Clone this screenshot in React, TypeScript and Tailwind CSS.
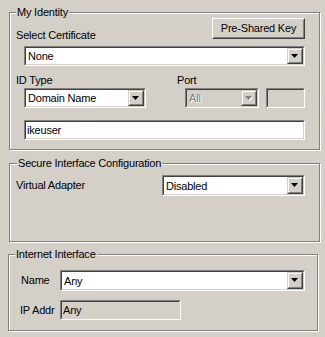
import type { ReactNode } from 'react';

// classic windows dialog: group boxes, combos and edits

function Group({ legend, legendPos, className, children }: { legend: string; legendPos: string; className: string; children: ReactNode }) {
  return (
    <div className={`relative border border-[#808080] shadow-[inset_1px_1px_0_#fff,1px_1px_0_#fff] ${className}`}>
      <span className={`absolute top-[-7px] bg-[#d4d0c8] px-[1px] ${legendPos}`}>{legend}</span>
      {children}
    </div>
  );
}

function Sunken({ className, bg, children }: { className: string; bg: string; children?: ReactNode }) {
  return (
    <div className={`border border-t-[#808080] border-l-[#808080] border-b-white border-r-white ${className}`}>
      <div className={`h-full flex items-center border border-t-[#404040] border-l-[#404040] border-b-[#d4d0c8] border-r-[#d4d0c8] ${bg}`}>
        {children}
      </div>
    </div>
  );
}

function Arrow({ disabled }: { disabled?: boolean }) {
  return (
    <svg width="8" height="5" viewBox="0 0 8 5" className="block">
      {disabled && <path d="M1 1h7L4.5 5z" fill="#fff" />}
      <path d="M0 0h7L3.5 4z" fill={disabled ? '#808080' : '#000'} />
    </svg>
  );
}

function Combo({ value, className, disabled }: { value: string; className: string; disabled?: boolean }) {
  return (
    <Sunken className={className} bg={disabled ? 'bg-[#d4d0c8]' : 'bg-white'}>
      <span className={`flex-1 pl-[2px] pt-[1px] ${disabled ? 'text-[#808080] [text-shadow:1px_1px_0_#fff]' : ''}`}>{value}</span>
      <div className="w-[16px] h-full border border-t-[#d4d0c8] border-l-[#d4d0c8] border-b-[#404040] border-r-[#404040]">
        <div className="h-full flex items-center justify-center bg-[#d4d0c8] border border-t-white border-l-white border-b-[#808080] border-r-[#808080]">
          <Arrow disabled={disabled} />
        </div>
      </div>
    </Sunken>
  );
}

export default function App() {
  return (
    <div className="w-[325px] h-[337px] overflow-hidden bg-[#d4d0c8] pt-[12px] text-black text-[11px] leading-[13px] tracking-[-0.2px] font-['Liberation_Sans',Arial,sans-serif]">
      {/* My Identity */}
      <Group legend="My Identity" legendPos="left-[6px]" className="ml-[9px] w-[311px] h-[138px]">
        <div className="pl-[6px] pr-[14px]">
          <div className="flex items-start justify-between pt-[5px]">
            <span className="mt-[11px]">Select Certificate</span>
            <button className="w-[93px] h-[21px] border border-t-white border-l-white border-b-[#404040] border-r-[#404040]">
              <div className="h-full flex items-center justify-center border border-t-[#d4d0c8] border-l-[#d4d0c8] border-b-[#808080] border-r-[#808080]">
                Pre-Shared Key
              </div>
            </button>
          </div>
          <Combo value="None" className="mt-[4px] ml-[8px] h-[20px]" />
          <div className="flex mt-[8px]">
            <span className="w-[161px]">ID Type</span>
            <span>Port</span>
          </div>
          <div className="flex mt-[1px] ml-[8px]">
            <Combo value="Domain Name" className="w-[122px] h-[20px]" />
            <Combo value="All" disabled className="ml-[39px] w-[74px] h-[20px]" />
            <Sunken className="ml-[7px] w-[39px] h-[20px]" bg="bg-[#d4d0c8]" />
          </div>
          <Sunken className="mt-[12px] ml-[8px] h-[20px]" bg="bg-white">
            <span className="pl-[1px] pt-[1px]">ikeuser</span>
          </Sunken>
        </div>
      </Group>

      {/* Secure Interface Configuration */}
      <Group legend="Secure Interface Configuration" legendPos="left-[7px]" className="mt-[13px] ml-[9px] w-[311px] h-[79px]">
        <div className="pl-[6px] pr-[14px] pt-[11px] flex items-center">
          <span className="w-[146px]">Virtual Adapter</span>
          <Combo value="Disabled" className="flex-1 h-[21px]" />
        </div>
      </Group>

      {/* Internet Interface */}
      <Group legend="Internet Interface" legendPos="left-[6px]" className="mt-[12px] ml-[8px] w-[310px] h-[77px]">
        <div className="pl-[11px] pr-[12px] pt-[15px]">
          <div className="flex items-center">
            <span className="w-[40px] pl-[1px]">Name</span>
            <Combo value="Any" className="flex-1 h-[21px]" />
          </div>
          <div className="flex items-center mt-[9px]">
            <span className="w-[40px]">IP Addr</span>
            <Sunken className="w-[121px] h-[20px]" bg="bg-[#d4d0c8]">
              <span className="pl-[1px] pt-[1px]">Any</span>
            </Sunken>
          </div>
        </div>
      </Group>
    </div>
  );
}
